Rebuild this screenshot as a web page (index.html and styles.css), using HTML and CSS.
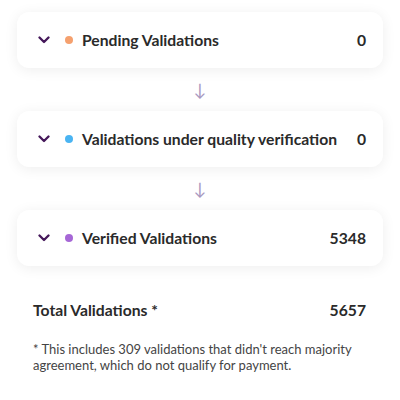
FILE: index.html
```html
<!DOCTYPE html>
<html>
<head>
<meta charset="utf-8">
<link rel="stylesheet" href="styles.css">
</head>
<body>
<div class="page">
  <div class="card">
    <svg class="chev" width="12" height="8" viewBox="0 0 12 8"><path d="M1.5 1.5 L6 6 L10.5 1.5" fill="none" stroke="#45185a" stroke-width="2.3" stroke-linecap="round" stroke-linejoin="round"/></svg>
    <span class="dot orange"></span>
    <span class="label">Pending Validations</span>
    <span class="num">0</span>
  </div>
  <div class="arrow">↓</div>
  <div class="card">
    <svg class="chev" width="12" height="8" viewBox="0 0 12 8"><path d="M1.5 1.5 L6 6 L10.5 1.5" fill="none" stroke="#45185a" stroke-width="2.3" stroke-linecap="round" stroke-linejoin="round"/></svg>
    <span class="dot blue"></span>
    <span class="label">Validations under quality verification</span>
    <span class="num">0</span>
  </div>
  <div class="arrow">↓</div>
  <div class="card">
    <svg class="chev" width="12" height="8" viewBox="0 0 12 8"><path d="M1.5 1.5 L6 6 L10.5 1.5" fill="none" stroke="#45185a" stroke-width="2.3" stroke-linecap="round" stroke-linejoin="round"/></svg>
    <span class="dot purple"></span>
    <span class="label">Verified Validations</span>
    <span class="num">5348</span>
  </div>
  <div class="total">
    <span class="tlabel">Total Validations *</span>
    <span class="tnum">5657</span>
  </div>
  <p class="note">* This includes 309 validations that didn't reach majority agreement, which do not qualify for payment.</p>
</div>
</body>
</html>
```
FILE: styles.css
```css
* { box-sizing: border-box; }
html, body { margin: 0; padding: 0; background: #ffffff; }
body { font-family: Lato, "Noto Sans", sans-serif; color: #2b2b2b; }
.page { padding: 12px 17px 0 17px; display: flex; flex-direction: column; }
.card {
  height: 56px;
  background: #fff;
  border-radius: 12px;
  box-shadow: 0 2px 14px rgba(0,0,0,0.07);
  display: flex;
  align-items: center;
  padding: 0 17px 0 21px;
}
.chev { flex: none; margin-right: 15px; }
.dot { width: 8px; height: 8px; border-radius: 50%; flex: none; margin-right: 9px; }
.orange { background: #f5a06e; }
.blue { background: #4ab4f2; }
.purple { background: #a667d6; }
.label { font-weight: 700; font-size: 15.7px; flex: 1; color: #2a2a2a; }
.num { font-weight: 700; font-size: 15.7px; color: #2a2a2a; }
.arrow { height: 43px; display: flex; align-items: center; justify-content: center; color: #a898bf; font-size: 17px; }
.total { display: flex; justify-content: space-between; padding: 35px 17px 0 16px; font-weight: 700; font-size: 15.7px; color: #2a2a2a; }
.note { margin: 22px 0 0 0; padding: 0 17px 0 16px; font-size: 13px; line-height: 16px; color: #444; }
```
